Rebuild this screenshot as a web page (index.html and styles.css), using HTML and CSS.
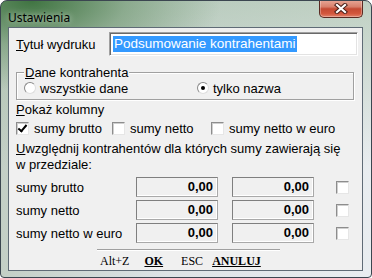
FILE: index.html
```html
<!DOCTYPE html>
<html lang="pl">
<head>
    <meta charset="UTF-8">
    <title>Ustawienia</title>
    <link rel="stylesheet" href="styles.css">
</head>
<body>
    <div class="window">
        <div class="titlebar">
            <span class="caption">Ustawienia</span>
            <span class="close">
                <svg width="14" height="11" viewBox="0 0 14 11">
                    <path d="M3 2 L11 9 M11 2 L3 9" stroke="#4b2019" stroke-width="4.2" stroke-linecap="square"/>
                    <path d="M3 2 L11 9 M11 2 L3 9" stroke="#ffffff" stroke-width="2.2" stroke-linecap="square"/>
                </svg>
            </span>
        </div>
        <div class="client">
            <div class="title-row">
                <span class="lbl"><u>T</u>ytuł wydruku</span>
                <div class="edit"><span class="sel">Podsumowanie kontrahentami</span></div>
            </div>

            <div class="group">
                <span class="legend"><u>D</u>ane kontrahenta</span>
                <div class="radios">
                    <span class="radio"></span>
                    <span class="lbl">wszystkie dane</span>
                    <span class="radio on"></span>
                    <span class="lbl">tylko nazwa</span>
                </div>
            </div>

            <div class="lbl section"><u>P</u>okaż kolumny</div>
            <div class="checks">
                <span class="opt"><span class="check on"></span>sumy brutto</span>
                <span class="opt"><span class="check"></span>sumy netto</span>
                <span class="opt"><span class="check"></span>sumy netto w euro</span>
            </div>

            <p class="info"><u>U</u>względnij kontrahentów dla których sumy zawierają się<br>w przedziale:</p>

            <div class="ranges">
                <span class="lbl">sumy brutto</span>
                <span class="num">0,00</span>
                <span class="num">0,00</span>
                <span class="check"></span>

                <span class="lbl">sumy netto</span>
                <span class="num">0,00</span>
                <span class="num">0,00</span>
                <span class="check"></span>

                <span class="lbl">sumy netto w euro</span>
                <span class="num">0,00</span>
                <span class="num">0,00</span>
                <span class="check"></span>
            </div>

            <div class="footer">
                <div class="sep"></div>
                <div class="keys">
                    <span>Alt+Z</span>
                    <b><u>OK</u></b>
                    <span class="esc">ESC</span>
                    <b><u>ANULUJ</u></b>
                </div>
            </div>
        </div>
    </div>
</body>
</html>
```

FILE: styles.css
```css
body{
    margin: 0;
    background: #ffffff;
}
.window{
    width: 372px;
    height: 278px;
    box-sizing: border-box;
    display: flex;
    flex-direction: column;
    border: 1px solid #3b4650;
    border-radius: 7px 7px 4px 4px;
    background:
        radial-gradient(ellipse 190px 90px at 30px 0px, rgba(58,112,60,0.95), rgba(110,150,112,0.6) 50%, rgba(200,212,206,0) 100%),
        linear-gradient(to bottom, rgba(150,180,150,0.5), rgba(220,226,230,0) 60%),
        linear-gradient(to right, #c3cfc6, #dde3e6 45%, #e9edf0);
    overflow: hidden;
}
.titlebar{
    height: 26px;
    flex: none;
    display: flex;
    align-items: flex-start;
    justify-content: space-between;
}
.caption{
    font-family: "Noto Sans", "DejaVu Sans", sans-serif;
    font-size: 12px;
    color: #000;
    margin: 8px 0 0 7px;
    text-shadow: 0 0 6px rgba(255,255,255,0.8);
}
.close{
    width: 44px;
    height: 18px;
    margin-right: 8px;
    margin-top: -1px;
    box-sizing: border-box;
    border: 1px solid #5a2a22;
    border-top: 0;
    border-radius: 0 0 5px 5px;
    background: linear-gradient(to bottom, #e9a898 0%, #d8806c 40%, #c44a33 52%, #d3573d 80%, #e2836b 100%);
    box-shadow: inset 0 0 0 1px rgba(255,255,255,0.3);
    display: flex;
    align-items: center;
    justify-content: center;
}
.client{
    flex: 1;
    margin: 0 8px 6px 7px;
    border: 1px solid #5f6b76;
    background: #f0f0f0;
    padding: 0 6px 0 7px;
    font-family: "Liberation Sans", Arial, sans-serif;
    font-size: 13px;
    color: #000;
}
.title-row{
    margin-top: 4px;
    height: 24px;
    display: flex;
    align-items: center;
}
.lbl{
    line-height: 15px;
    white-space: nowrap;
}
.title-row .lbl{
    width: 93px;
}
.edit{
    flex: 1;
    height: 24px;
    box-sizing: border-box;
    border: 1px solid;
    border-color: #a0a0a0 #ffffff #ffffff #a0a0a0;
    box-shadow: inset 1px 1px 0 #696969, inset -1px -1px 0 #e3e3e3;
    background: #fff;
    display: flex;
    align-items: center;
    padding-left: 3px;
    margin-right: -2px;
}
.sel{
    background: #3399ff;
    color: #fff;
    font-size: 13.5px;
    line-height: 16px;
    padding: 0 1px;
}
.group{
    margin: 16px 2px 0 0;
    padding: 0 0 3px 7px;
    border: 1px solid #a0a0a0;
    box-shadow: 1px 1px 0 #fff, inset 1px 1px 0 #fff;
}
.legend{
    display: table;
    margin-top: -8px;
    padding: 0 1px;
    line-height: 15px;
    background: #f0f0f0;
}
.radios{
    height: 16px;
    display: grid;
    grid-template-columns: 12px 153px 12px auto;
    column-gap: 4px;
    align-items: center;
}
.opt{
    display: flex;
    align-items: center;
    line-height: 15px;
}
.radio{
    width: 12px;
    height: 12px;
    box-sizing: border-box;
    border-radius: 50%;
    border: 1px solid;
    border-color: #8a8a8a #dedede #dedede #8a8a8a;
    background: #fff;
    display: flex;
    align-items: center;
    justify-content: center;
}
.radio.on::after{
    content: "";
    width: 4px;
    height: 4px;
    border-radius: 50%;
    background: #000;
}
.section{
    margin-top: 2px;
}
.checks{
    margin-top: 3px;
    height: 16px;
    display: grid;
    grid-template-columns: 96px 99px auto;
    align-items: center;
}
.check{
    flex: none;
    width: 13px;
    height: 13px;
    box-sizing: border-box;
    border: 1px solid;
    border-color: #8d8d8d #e6e6e6 #e6e6e6 #8d8d8d;
    box-shadow: inset 1px 1px 0 #cfcfcf;
    background: #fff;
    margin-right: 5px;
    position: relative;
}
.check.on::after{
    content: "";
    position: absolute;
    left: 3px;
    top: 0px;
    width: 3px;
    height: 7px;
    border: solid #000;
    border-width: 0 2px 2px 0;
    transform: rotate(40deg);
}
.info{
    margin: 5px 0 0 0;
    line-height: 16px;
}
.ranges{
    margin-top: 4px;
    display: grid;
    grid-template-columns: 106px 82px 82px auto;
    grid-auto-rows: 20px;
    column-gap: 14px;
    row-gap: 3px;
    align-items: center;
}
.num{
    height: 20px;
    box-sizing: border-box;
    border: 1px solid;
    border-color: #7f7f7f #a9a9a9 #a9a9a9 #7f7f7f;
    box-shadow: inset -1px -1px 0 #fff;
    font-weight: bold;
    text-align: right;
    padding-right: 4px;
    line-height: 18px;
}
.ranges .check{
    margin-left: 8px;
}
.footer{
    margin-top: 6px;
}
.sep{
    margin-left: 81px;
    width: 183px;
    height: 1px;
    background: #a0a0a0;
    border-bottom: 1px solid #fff;
}
.keys{
    margin: 2px 0 0 84px;
    height: 16px;
    display: flex;
    align-items: center;
    gap: 15px;
    font-family: "Liberation Serif", "Times New Roman", serif;
    font-size: 12px;
}
.keys .esc{
    margin-left: 3px;
    margin-right: -6px;
}
```
